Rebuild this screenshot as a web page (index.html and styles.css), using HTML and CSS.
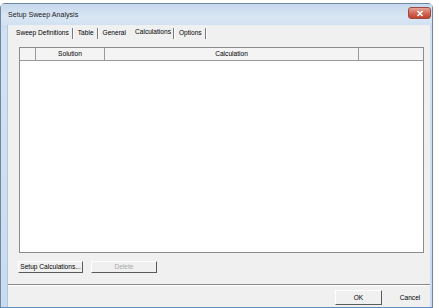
FILE: index.html
```html
<!DOCTYPE html>
<html>
<head>
<meta charset="utf-8">
<link rel="stylesheet" href="styles.css">
</head>
<body>
<div class="window">
  <div class="titlebar">
    <span class="title">Setup Sweep Analysis</span>
    <span class="close"><svg width="10" height="7" viewBox="0 0 10 7"><path d="M2.5 1 L7.5 6 M7.5 1 L2.5 6" stroke="#fff" stroke-width="1.6" fill="none"/></svg></span>
  </div>
  <div class="frame">
    <div class="client">
      <div class="tabs">
        <span class="tab">Sweep Definitions</span><span class="sep"></span>
        <span class="tab">Table</span><span class="sep"></span>
        <span class="tab">General</span>
        <span class="tab active">Calculations</span><span class="sep"></span>
        <span class="tab">Options</span><span class="sep"></span>
      </div>
      <div class="grid">
        <div class="head">
          <div class="hc c0"></div>
          <div class="hc c1">Solution</div>
          <div class="hc c2">Calculation</div>
          <div class="hc c3"></div>
        </div>
        <div class="body"></div>
      </div>
      <div class="actions">
        <button class="btn setup">Setup Calculations...</button>
        <button class="btn delete" disabled>Delete</button>
      </div>
      <div class="separator"></div>
      <div class="footer">
        <button class="btn ok">OK</button>
        <button class="btn cancel">Cancel</button>
      </div>
    </div>
  </div>
</div>
</body>
</html>
```

FILE: styles.css
```css
html, body {
  margin: 0;
  padding: 0;
  background: #ffffff;
}
body {
  width: 439px;
  height: 308px;
  overflow: hidden;
  font-family: "Liberation Sans", Arial, sans-serif;
  font-size: 6.6px;
  color: #000;
}
.window {
  margin-top: 3px;
  width: 431px;
  height: 303px;
  border: 1px solid #6e87a3;
  border-bottom: 2px solid #5b8cc2;
  border-radius: 5px 5px 0 0;
  background: linear-gradient(to bottom, #bdd2ea 0%, #d3e2f3 10%, #c9dbef 100%);
  display: flex;
  flex-direction: column;
}
.titlebar {
  height: 21px;
  display: flex;
  align-items: center;
  padding-left: 7px;
  padding-right: 1px;
  background: linear-gradient(to bottom, #c6d8ec 0%, #d9e6f4 60%, #d2e1f2 100%);
}
.title {
  font-size: 7.1px;
  color: #1a1a1a;
}
.close {
  margin-left: auto;
  margin-top: -3px;
  width: 21px;
  height: 10px;
  border: 1px solid #9a4a42;
  border-radius: 3px;
  background: linear-gradient(to bottom, #e4a596 0%, #d46a5a 50%, #c0402f 100%);
  display: flex;
  align-items: center;
  justify-content: center;
}
.frame {
  flex: 1;
  display: flex;
  padding: 0 2px 0 6px;
}
.client {
  flex: 1;
  background: #f0f0f0;
  display: flex;
  flex-direction: column;
  overflow: hidden;
  border-left: 1px solid #b5c7dc;
}
.tabs {
  margin-top: 2px;
  height: 12px;
  display: flex;
  align-items: center;
  padding-left: 4px;
}
.tab {
  padding: 0 3px 0 4px;
  line-height: 12px;
  white-space: nowrap;
}
.tab.active {
  padding: 0 2px 0 6px;
  position: relative;
  top: -1px;
}
.sep {
  width: 1px;
  height: 11px;
  background: #7a7a7a;
  border-right: 1px solid #ffffff;
}
.grid {
  margin: 8px 6px 0 11px;
  height: 206px;
  border: 1px solid #8c8c8c;
  background: #ffffff;
  display: flex;
  flex-direction: column;
  box-sizing: border-box;
}
.head {
  height: 12px;
  display: flex;
  background: #f4f4f4;
  border-bottom: 1px solid #9a9a9a;
}
.hc {
  border-right: 1px solid #9a9a9a;
  text-align: center;
  line-height: 12px;
  white-space: nowrap;
}
.c0 { width: 15px; }
.c1 { width: 68px; }
.c2 { width: 253px; }
.c3 { flex: 1; border-right: none; }
.body {
  flex: 1;
}
.actions {
  margin-top: 8px;
  height: 12px;
  display: flex;
  gap: 8px;
  padding-left: 10px;
}
.btn {
  font-family: "Liberation Sans", Arial, sans-serif;
  font-size: 6.6px;
  color: #000;
  background: #f0f0f0;
  margin: 0;
  padding: 0;
  height: 12px;
  line-height: 10px;
  border: 1px solid;
  border-color: #ffffff #5a5a5a #5a5a5a #ffffff;
  box-sizing: border-box;
}
.setup { width: 65px; }
.delete { width: 66px; color: #a8a8a8; }
.separator {
  margin-top: 11px;
  height: 1px;
  background: #8a8a8a;
  border-bottom: 1px solid #ffffff;
}
.footer {
  margin-top: 4px;
  display: flex;
  justify-content: flex-end;
  gap: 8px;
}
.ok {
  width: 47px;
  height: 15px;
  border-color: #ffffff #5a5a5a #5a5a5a #ffffff;
}
.cancel {
  width: 40px;
  height: 15px;
  border-color: transparent;
}
```
